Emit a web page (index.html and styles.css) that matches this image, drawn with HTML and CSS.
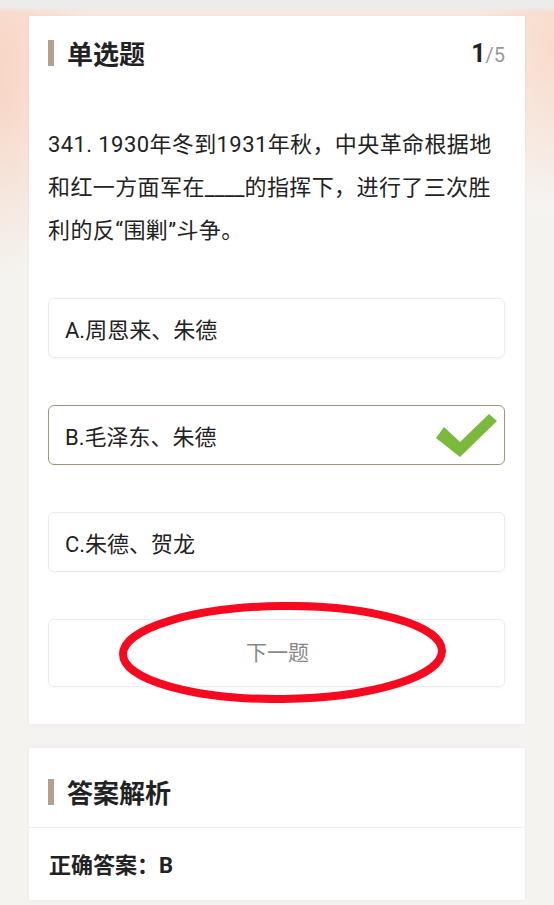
FILE: index.html
```html
<!DOCTYPE html>
<html lang="zh-CN">
<head>
  <meta charset="UTF-8">
  <meta name="viewport" content="width=device-width, initial-scale=1.0">
  <title>单选题</title>
  <link rel="stylesheet" href="styles.css">
</head>
<body>
  <div class="page">
    <section class="card quiz">
      <div class="card-head">
        <h2 class="title">单选题</h2>
        <div class="counter"><b>1</b><span>/5</span></div>
      </div>

      <p class="question">341. 1930年冬到1931年秋，中央革命根据地和红一方面军在<span class="blank">____</span>的指挥下，进行了三次胜利的反“围剿”斗争。</p>

      <ul class="options">
        <li class="option">A.周恩来、朱德</li>
        <li class="option correct">B.毛泽东、朱德
          <svg class="check" width="62" height="46" viewBox="0 0 62 46">
            <polygon points="0,25 8,14 24,29 53,1 61,8 24,44" fill="#7ab93c"/>
          </svg>
        </li>
        <li class="option">C.朱德、贺龙</li>
      </ul>

      <button class="next">下一题
        <svg class="circle" width="327" height="101" viewBox="0 0 327 101">
          <ellipse cx="163.5" cy="50.5" rx="159.5" ry="46.5" fill="none" stroke="#f70a1f" stroke-width="8" transform="rotate(-0.6 163.5 50.5)"/>
        </svg>
      </button>
    </section>

    <section class="card analysis">
      <div class="analysis-head">
        <h2 class="title">答案解析</h2>
      </div>
      <div class="analysis-body">正确答案：B</div>
    </section>
  </div>
</body>
</html>
```

FILE: styles.css
```css
body {
  margin: 0;
  font-family: Roboto, "Noto Sans CJK SC", sans-serif;
  color: #222;
  background:
    linear-gradient(to bottom, #ebebeb 0, #ececeb 7px, rgba(236, 236, 235, 0) 12px),
    radial-gradient(ellipse 90px 200px at 0 80px, rgba(247, 205, 184, 0.75), rgba(247, 205, 184, 0)),
    radial-gradient(ellipse 80px 150px at 554px 50px, rgba(249, 212, 194, 0.7), rgba(249, 212, 194, 0)),
    linear-gradient(to bottom, #f9e8df 10px, #f7eee9 90px, #f5f3f0 220px);
  background-color: #f5f3f0;
  height: 905px;
  overflow: hidden;
}
.page {
  padding: 16px 29px 0;
}
.card {
  background: #fff;
  box-shadow: 0 0 3px rgba(0, 0, 0, 0.05);
}
.quiz {
  padding: 21px 20px 37px 19px;
}
.card-head {
  display: flex;
  justify-content: space-between;
  align-items: center;
  height: 32px;
}
.title {
  margin: 0;
  font-family: "Noto Sans CJK SC", sans-serif;
  font-size: 26px;
  font-weight: bold;
  line-height: 32px;
  display: flex;
  align-items: center;
}
.title::before {
  content: "";
  width: 6px;
  height: 26px;
  background: #b4a08c;
  margin-right: 13px;
}
.counter b {
  font-size: 25px;
  font-weight: bold;
  color: #222;
}
.counter span {
  font-size: 20px;
  color: #999;
}
.question {
  margin: 54px 0 0;
  font-size: 22px;
  line-height: 43px;
  letter-spacing: 0.4px;
}
.blank {
  letter-spacing: 0;
}
.options {
  list-style: none;
  margin: 46px 0 0;
  padding: 0;
  display: flex;
  flex-direction: column;
  gap: 47px;
}
.option {
  position: relative;
  height: 60px;
  box-sizing: border-box;
  display: flex;
  align-items: center;
  padding: 0 16px;
  font-size: 22px;
  border: 1px solid #ebebeb;
  border-radius: 6px;
  box-shadow: 0 1px 3px rgba(0, 0, 0, 0.04);
}
.option.correct {
  border-color: #a39681;
}
.check {
  position: absolute;
  right: 6px;
  top: 7px;
}
.next {
  position: relative;
  display: block;
  width: 100%;
  height: 68px;
  margin-top: 47px;
  background: #fff;
  border: 1px solid #ececec;
  border-radius: 6px;
  box-shadow: 0 1px 3px rgba(0, 0, 0, 0.04);
  font-family: "Noto Sans CJK SC", sans-serif;
  font-size: 21px;
  color: #888;
  padding: 0 0 5px 2px;
}
.circle {
  position: absolute;
  left: 70px;
  top: -18px;
}
.analysis {
  margin-top: 24px;
  height: 152px;
}
.analysis-head {
  padding: 28px 19px 19px;
  border-bottom: 1px solid #eef0f2;
}
.analysis-body {
  padding: 25px 20px 0;
  font-size: 22px;
  font-weight: bold;
  line-height: 26px;
}
```
